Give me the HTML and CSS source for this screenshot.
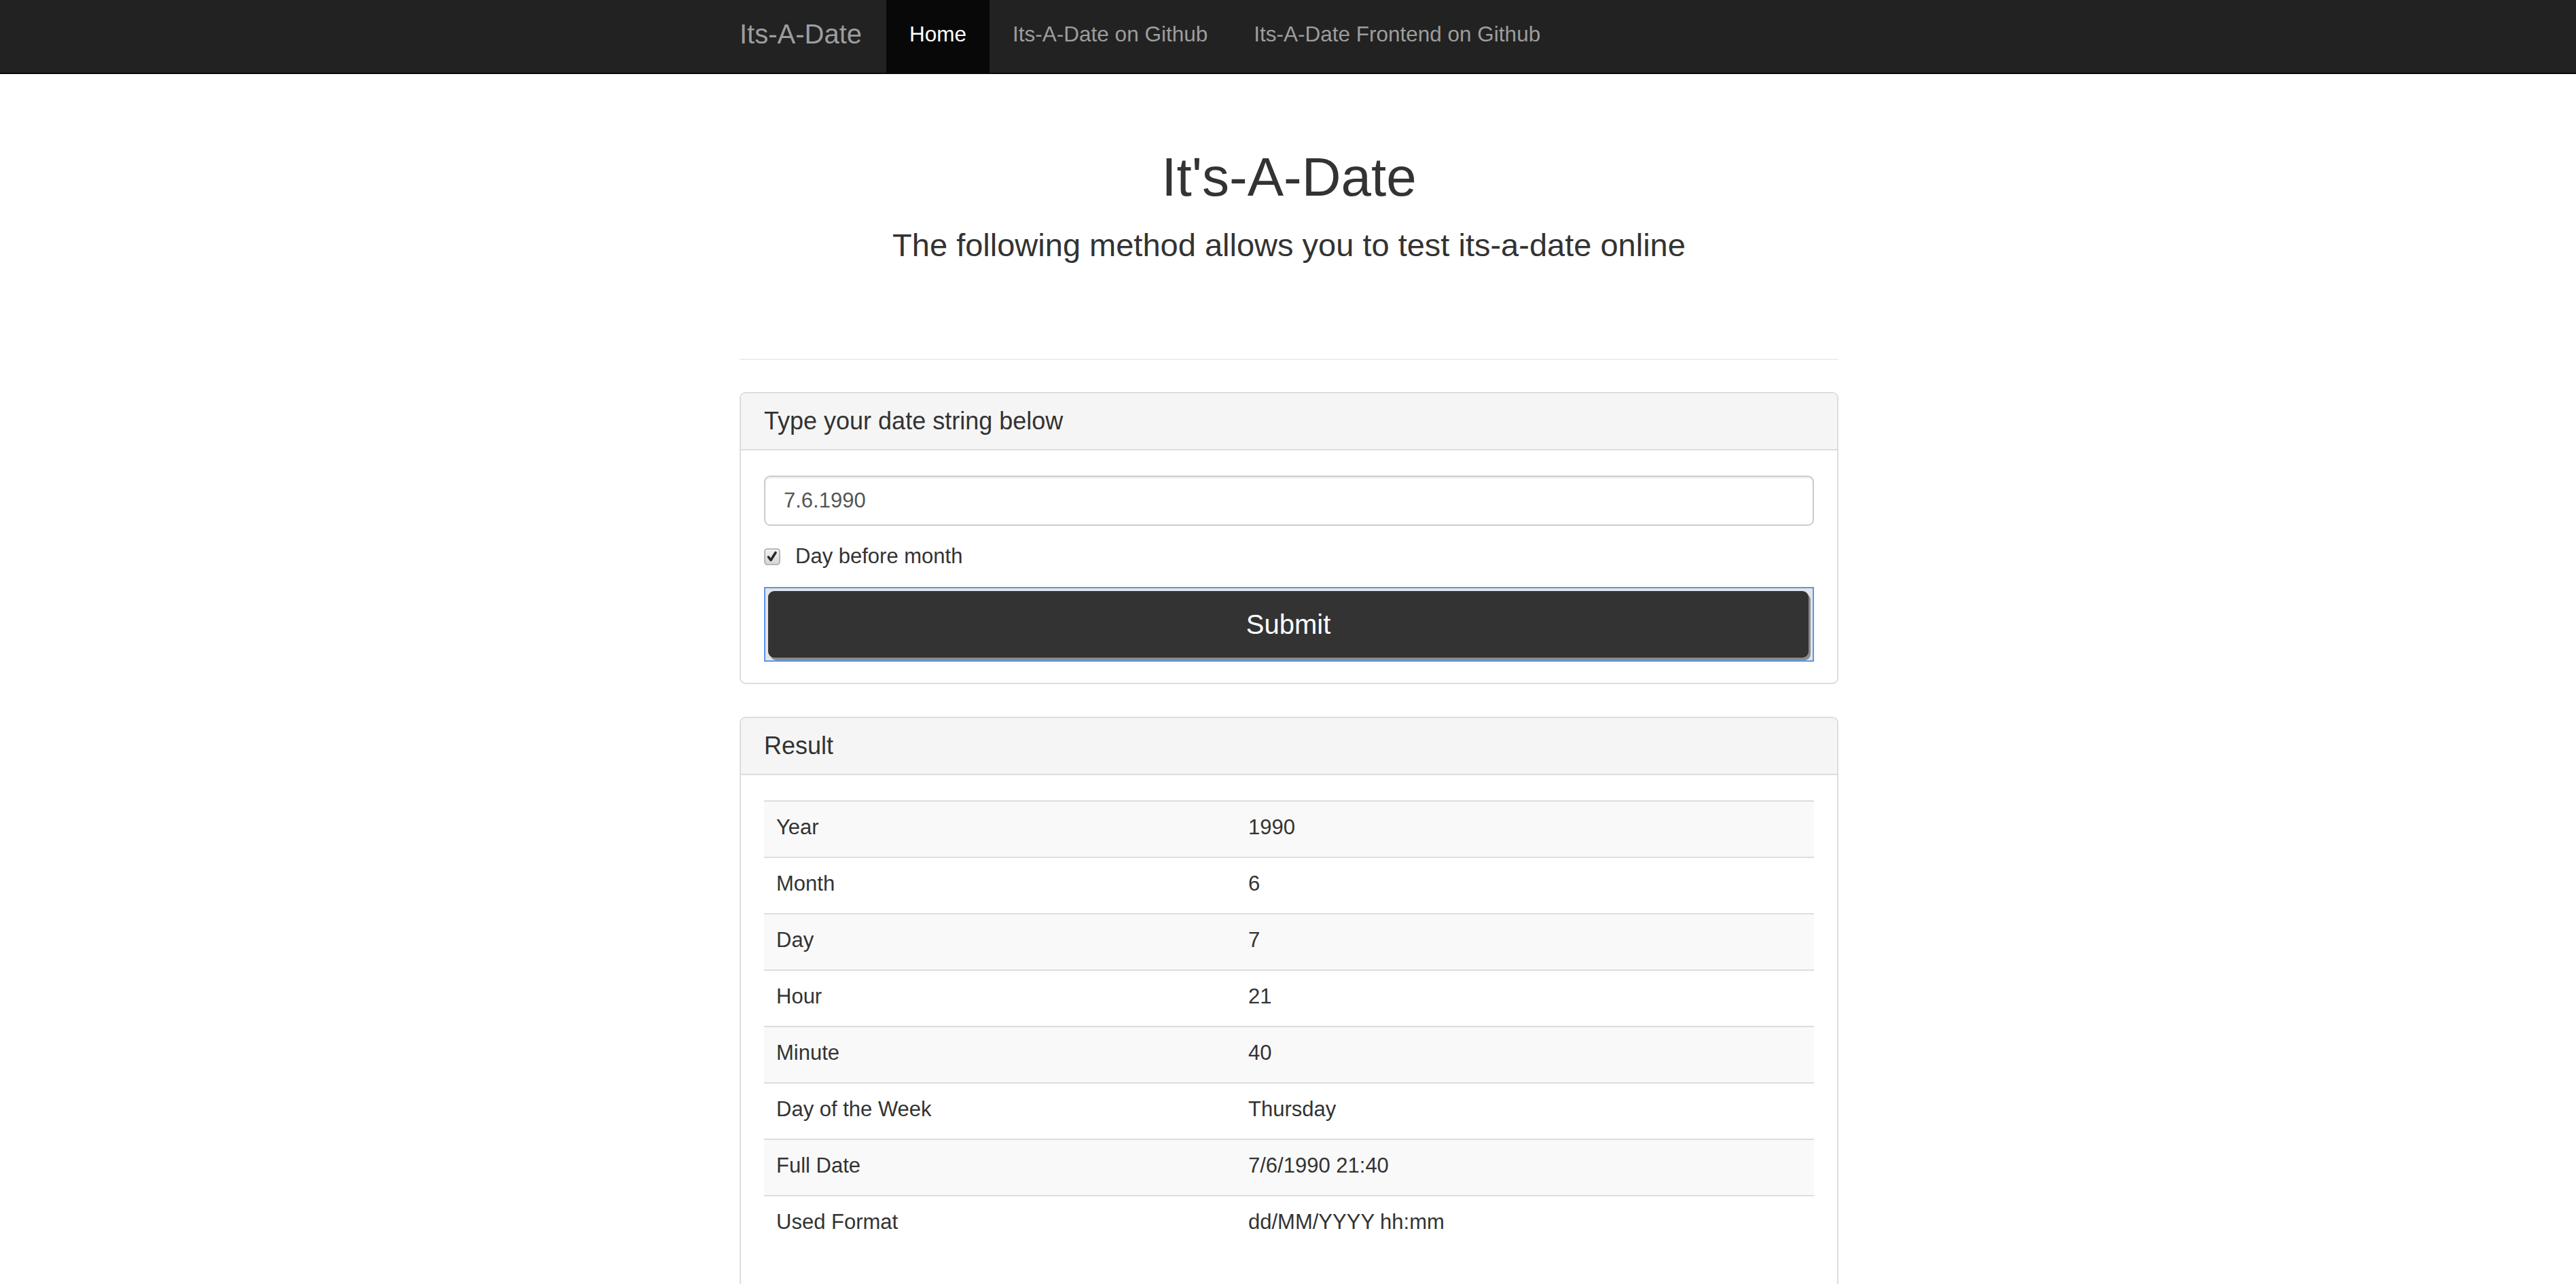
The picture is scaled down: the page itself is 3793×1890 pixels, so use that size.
FILE: index.html
```html
<!DOCTYPE html>
<html lang="en">
<head>
<meta charset="utf-8">
<title>It's-A-Date</title>
<link rel="stylesheet" href="styles.css">
</head>
<body>
<nav class="navbar">
  <div class="nav-inner">
    <a class="brand" href="#">Its-A-Date</a>
    <a class="nav-link active" href="#">Home</a>
    <a class="nav-link" href="#">Its-A-Date on Github</a>
    <a class="nav-link" href="#">Its-A-Date Frontend on Github</a>
  </div>
</nav>
<div class="page">
<main class="container">
  <header class="hero">
    <h1>It's-A-Date</h1>
    <p>The following method allows you to test its-a-date online</p>
  </header>
  <hr class="divider">
  <section class="panel">
    <div class="panel-heading">Type your date string below</div>
    <div class="panel-body">
      <input class="form-control" type="text" value="7.6.1990">
      <label class="check-row">
        <svg class="cb" width="24" height="25" viewBox="0 0 24 25">
          <defs>
            <linearGradient id="cbg" x1="0" y1="0" x2="0" y2="1">
              <stop offset="0" stop-color="#f2f2f2"/>
              <stop offset="1" stop-color="#d6d6d6"/>
            </linearGradient>
          </defs>
          <rect x="1" y="1" width="22" height="23" rx="4" fill="url(#cbg)" stroke="#a6a6a6" stroke-width="1.6"/>
          <path d="M6.5 13 L10 17.5 L17 6.5" fill="none" stroke="#2a2a2a" stroke-width="3.6" stroke-linecap="round" stroke-linejoin="round"/>
        </svg>
        <span>Day before month</span>
      </label>
      <div class="focus-ring">
        <button class="btn-submit" type="button">Submit</button>
      </div>
    </div>
  </section>
  <section class="panel">
    <div class="panel-heading">Result</div>
    <div class="panel-body result-body">
      <table class="table">
        <tbody>
          <tr><td class="label-col">Year</td><td>1990</td></tr>
          <tr><td class="label-col">Month</td><td>6</td></tr>
          <tr><td class="label-col">Day</td><td>7</td></tr>
          <tr><td class="label-col">Hour</td><td>21</td></tr>
          <tr><td class="label-col">Minute</td><td>40</td></tr>
          <tr><td class="label-col">Day of the Week</td><td>Thursday</td></tr>
          <tr><td class="label-col">Full Date</td><td>7/6/1990 21:40</td></tr>
          <tr><td class="label-col">Used Format</td><td>dd/MM/YYYY hh:mm</td></tr>
        </tbody>
      </table>
    </div>
  </section>
</main>
</div>
</body>
</html>
```
FILE: styles.css
```css
* { box-sizing: border-box; }

body {
  margin: 0;
  font-family: "Liberation Sans", Arial, sans-serif;
  font-size: 31px;
  color: #333;
  background: #fff;
}

.navbar {
  background: #222;
  border-bottom: 2px solid #080808;
  height: 109px;
  padding-left: 3px;
}

.nav-inner {
  width: 1618px;
  margin: 0 auto;
  display: flex;
  height: 107px;
}

.brand {
  color: #9d9d9d;
  font-size: 40px;
  line-height: 101px;
  padding-bottom: 6px;
  margin-right: 36px;
  text-decoration: none;
}

.nav-link {
  color: #9d9d9d;
  font-size: 31.5px;
  line-height: 101px;
  padding: 0 34px 6px;
  text-decoration: none;
}

.nav-link.active {
  background: #080808;
  color: #fff;
}

.page {
  padding-left: 3px;
}

.container {
  width: 1618px;
  margin: 0 auto;
}

.hero {
  text-align: center;
}

.hero h1 {
  font-size: 80px;
  font-weight: 400;
  line-height: 88px;
  margin: 108px 0 0;
}

.hero p {
  font-size: 47px;
  line-height: 52px;
  margin: 30px 0 0;
}

.divider {
  margin: 141px 0 47px;
  border: 0;
  border-top: 2px solid #eee;
  height: 0;
}

.panel {
  border: 2px solid #ddd;
  border-radius: 9px;
  margin-bottom: 48px;
  background: #fff;
}

.panel-heading {
  background: #f5f5f5;
  border-bottom: 2px solid #ddd;
  border-radius: 7px 7px 0 0;
  height: 84px;
  line-height: 82px;
  padding: 0 34px;
  font-size: 36px;
}

.panel-body {
  padding: 37px 34px 31px;
}

.result-body {
  padding-top: 37px;
  padding-bottom: 33px;
}

.form-control {
  display: block;
  width: 100%;
  height: 74px;
  border: 2px solid #ccc;
  border-radius: 9px;
  padding: 0 27px;
  font-family: inherit;
  font-size: 31px;
  color: #555;
  background: #fff;
  box-shadow: inset 0 2px 2px rgba(0, 0, 0, 0.075);
  outline: none;
}

.check-row {
  display: flex;
  align-items: center;
  gap: 22px;
  height: 44px;
  margin-top: 23px;
  line-height: 44px;
}

.cb {
  flex: none;
  display: block;
}

.focus-ring {
  margin-top: 23px;
  border: 2px solid #5a95f2;
  background: #e4e4e4;
  padding: 4px 6px 4px 4px;
}

.btn-submit {
  display: block;
  width: 100%;
  height: 98px;
  border: 0;
  border-radius: 9px;
  background: #333;
  color: #fff;
  font-family: inherit;
  font-size: 40px;
  box-shadow: 3px 4px 0 #8c8c8c;
  cursor: pointer;
}

.table {
  width: 100%;
  border-collapse: collapse;
  margin-bottom: 44px;
}

.table td {
  border-top: 2px solid #ddd;
  padding: 16px 18px 21px;
  line-height: 44px;
  text-align: left;
  vertical-align: top;
}

.table .label-col {
  width: 695px;
}

.table tr:nth-child(odd) td {
  background: #f9f9f9;
}
```
